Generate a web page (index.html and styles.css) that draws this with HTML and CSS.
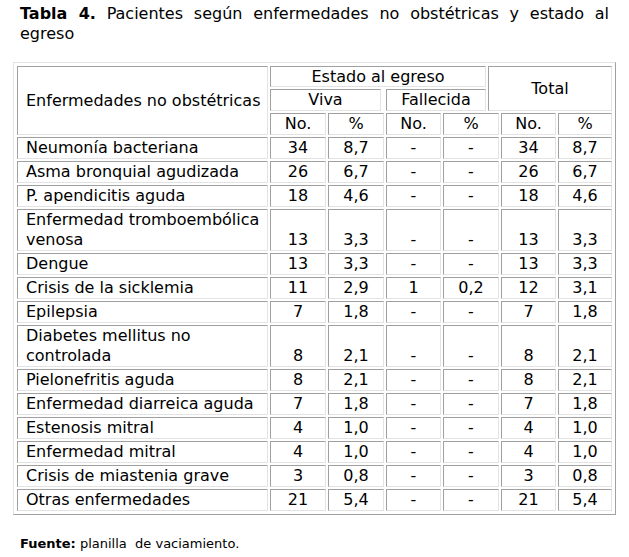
FILE: index.html
```html
<!DOCTYPE html>
<html lang="es">
<head>
<meta charset="utf-8">
<title>Tabla 4</title>
<link rel="stylesheet" href="styles.css">
</head>
<body>
<p class="title"><b>Tabla 4.</b> Pacientes según enfermedades no obstétricas y estado al egreso</p>

<div class="tbl">
  <div class="c hd-name">Enfermedades no obstétricas</div>
  <div class="c hd-estado">Estado al egreso</div>
  <div class="c hd-total">Total</div>
  <div class="c hd-viva">Viva</div>
  <div class="c hd-fall">Fallecida</div>
  <div class="c r3 c2">No.</div>
  <div class="c r3 c3">%</div>
  <div class="c r3 c4">No.</div>
  <div class="c r3 c5">%</div>
  <div class="c r3 c6">No.</div>
  <div class="c r3 c7">%</div>

  <div class="c name c1">Neumonía bacteriana</div><div class="c c2">34</div><div class="c c3">8,7</div><div class="c c4">-</div><div class="c c5">-</div><div class="c c6">34</div><div class="c c7">8,7</div>
  <div class="c name c1">Asma bronquial agudizada</div><div class="c c2">26</div><div class="c c3">6,7</div><div class="c c4">-</div><div class="c c5">-</div><div class="c c6">26</div><div class="c c7">6,7</div>
  <div class="c name c1">P. apendicitis aguda</div><div class="c c2">18</div><div class="c c3">4,6</div><div class="c c4">-</div><div class="c c5">-</div><div class="c c6">18</div><div class="c c7">4,6</div>
  <div class="c name c1">Enfermedad tromboembólica venosa</div><div class="c c2">13</div><div class="c c3">3,3</div><div class="c c4">-</div><div class="c c5">-</div><div class="c c6">13</div><div class="c c7">3,3</div>
  <div class="c name c1">Dengue</div><div class="c c2">13</div><div class="c c3">3,3</div><div class="c c4">-</div><div class="c c5">-</div><div class="c c6">13</div><div class="c c7">3,3</div>
  <div class="c name c1">Crisis de la sicklemia</div><div class="c c2">11</div><div class="c c3">2,9</div><div class="c c4">1</div><div class="c c5">0,2</div><div class="c c6">12</div><div class="c c7">3,1</div>
  <div class="c name c1">Epilepsia</div><div class="c c2">7</div><div class="c c3">1,8</div><div class="c c4">-</div><div class="c c5">-</div><div class="c c6">7</div><div class="c c7">1,8</div>
  <div class="c name c1">Diabetes mellitus no controlada</div><div class="c c2">8</div><div class="c c3">2,1</div><div class="c c4">-</div><div class="c c5">-</div><div class="c c6">8</div><div class="c c7">2,1</div>
  <div class="c name c1">Pielonefritis aguda</div><div class="c c2">8</div><div class="c c3">2,1</div><div class="c c4">-</div><div class="c c5">-</div><div class="c c6">8</div><div class="c c7">2,1</div>
  <div class="c name c1">Enfermedad diarreica aguda</div><div class="c c2">7</div><div class="c c3">1,8</div><div class="c c4">-</div><div class="c c5">-</div><div class="c c6">7</div><div class="c c7">1,8</div>
  <div class="c name c1">Estenosis mitral</div><div class="c c2">4</div><div class="c c3">1,0</div><div class="c c4">-</div><div class="c c5">-</div><div class="c c6">4</div><div class="c c7">1,0</div>
  <div class="c name c1">Enfermedad mitral</div><div class="c c2">4</div><div class="c c3">1,0</div><div class="c c4">-</div><div class="c c5">-</div><div class="c c6">4</div><div class="c c7">1,0</div>
  <div class="c name c1">Crisis de miastenia grave</div><div class="c c2">3</div><div class="c c3">0,8</div><div class="c c4">-</div><div class="c c5">-</div><div class="c c6">3</div><div class="c c7">0,8</div>
  <div class="c name c1">Otras enfermedades</div><div class="c c2">21</div><div class="c c3">5,4</div><div class="c c4">-</div><div class="c c5">-</div><div class="c c6">21</div><div class="c c7">5,4</div>
</div>

<p class="source"><b>Fuente:</b> planilla&nbsp; de vaciamiento.</p>
</body>
</html>
```

FILE: styles.css
```css
html, body {
  margin: 0;
  background: #fff;
}
body {
  color: #000;
  font-family: Verdana, "DejaVu Sans", sans-serif;
}
.title {
  margin: 4px 20px 0 20px;
  font-size: 16px;
  line-height: 20px;
  text-align: justify;
}
.tbl {
  display: grid;
  grid-template-columns: 253px 58px 55px 3px 57px 45px 13px 57px 56px;
  width: max-content;
  margin: 18px 0 0 13px;
  padding: 3px 1px 1px 3px;
  border: 1px solid;
  border-color: #e3e3e3 #a0a0a0 #a0a0a0 #e3e3e3;
}
.c {
  margin: 0 2px 2px 0;
  border: 1px solid;
  border-color: #a0a0a0 #e3e3e3 #e3e3e3 #a0a0a0;
  font-size: 16px;
  line-height: 20px;
  display: flex;
  align-items: flex-end;
  justify-content: center;
  text-align: center;
}
.name {
  justify-content: flex-start;
  text-align: left;
  padding: 0 2px 0 8px;
}
.hd-name {
  grid-column: 1 / 2;
  grid-row: 1 / 4;
  justify-content: flex-start;
  align-items: center;
  padding-left: 8px;
}
.hd-estado {
  grid-column: 2 / 7;
  grid-row: 1;
  line-height: 19px;
}
.hd-total {
  grid-column: 7 / 10;
  grid-row: 1 / 3;
  align-items: center;
}
.hd-viva {
  grid-column: 2 / 4;
  grid-row: 2;
}
.hd-fall {
  grid-column: 5 / 7;
  grid-row: 2;
}
.r3 { grid-row: 3; }
.c1 { grid-column: 1 / 2; }
.c2 { grid-column: 2 / 3; }
.c3 { grid-column: 3 / 5; }
.c4 { grid-column: 5 / 6; }
.c5 { grid-column: 6 / 8; }
.c6 { grid-column: 8 / 9; }
.c7 { grid-column: 9 / 10; }
.source {
  margin: 21px 0 0 20px;
  font-size: 13px;
  line-height: 16px;
}
```
